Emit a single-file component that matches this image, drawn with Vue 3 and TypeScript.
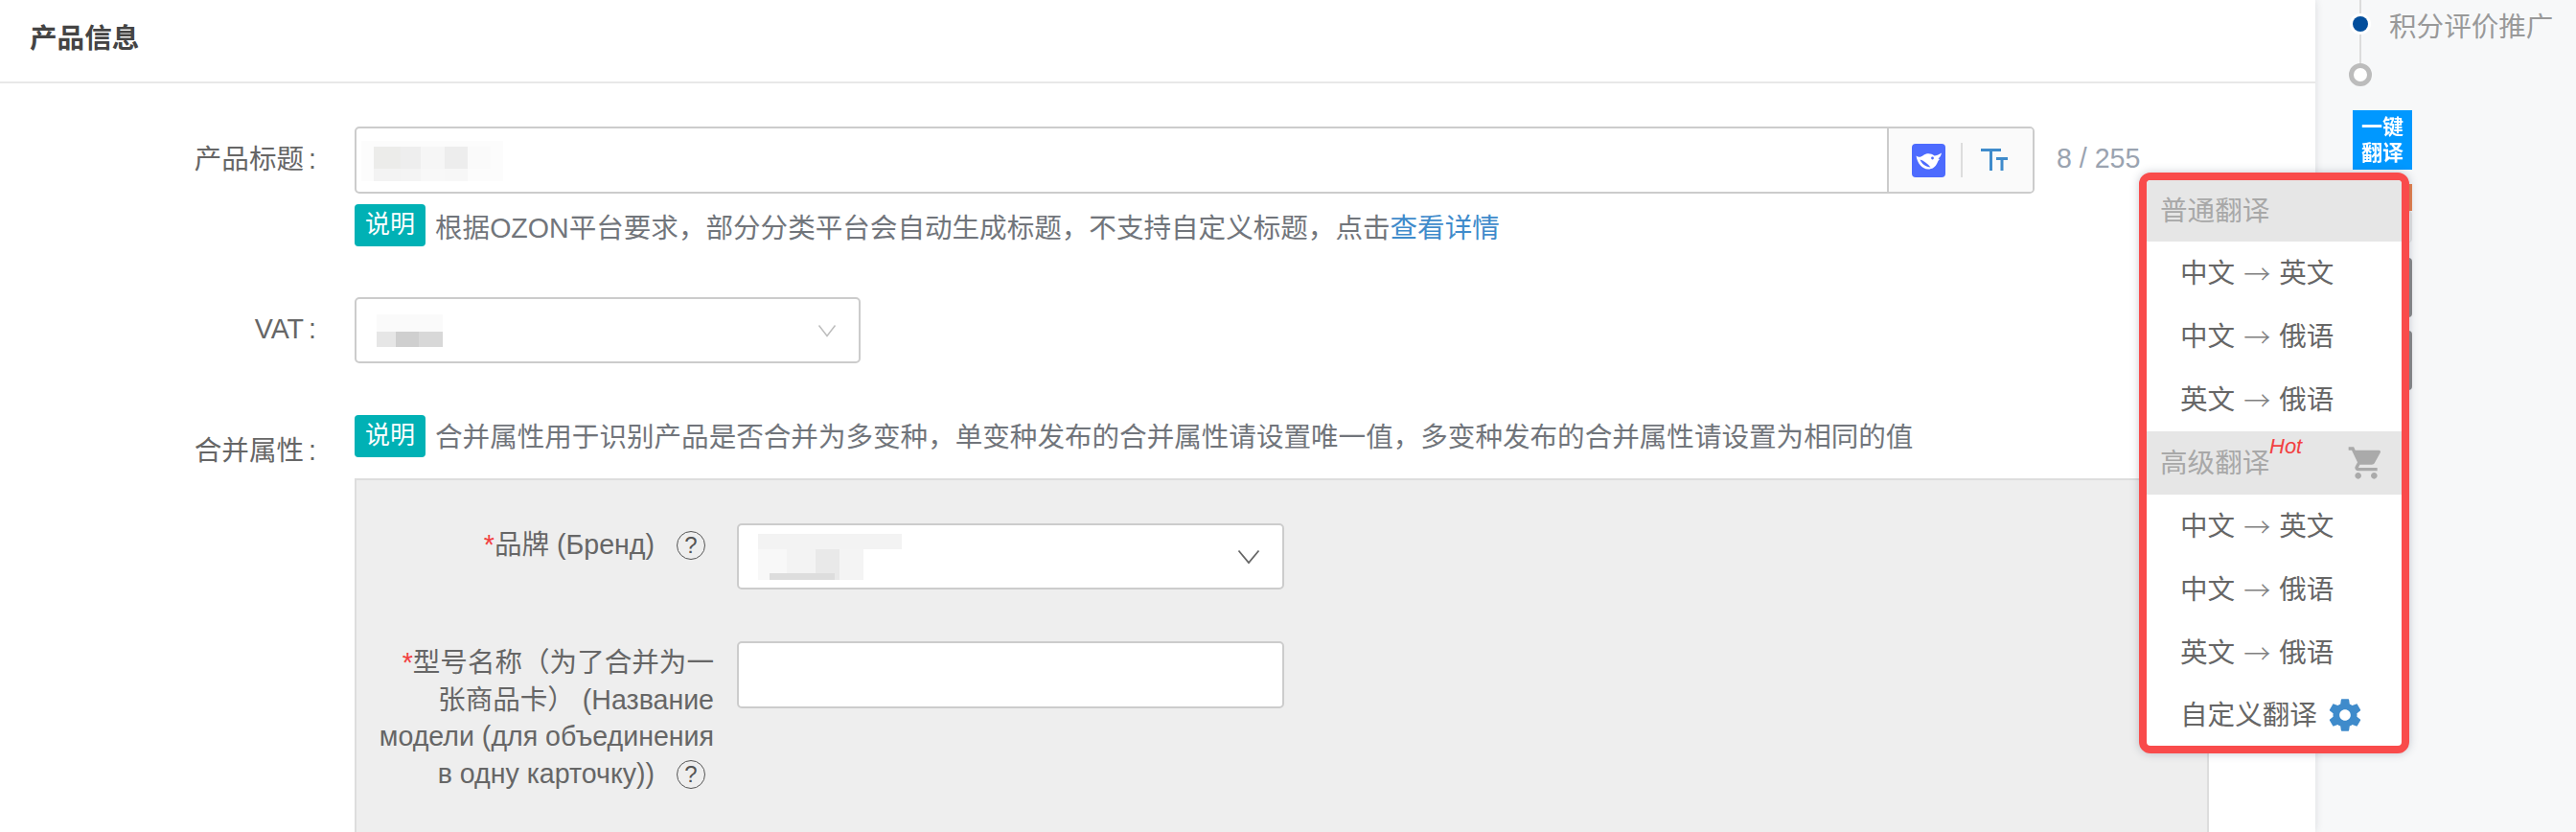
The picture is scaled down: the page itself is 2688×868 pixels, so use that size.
<script setup lang="ts">
interface Cell { x: number; y: number; w: number; h: number; c: string }
interface Pair { from: string; to: string }
const titleCells: Cell[] = [
  { x: 5, y: 14, w: 148, h: 42, c: '#fcfcfc' },
  { x: 18, y: 20, w: 28, h: 23, c: '#ececea' },
  { x: 46, y: 20, w: 21, h: 23, c: '#eeeeee' },
  { x: 67, y: 20, w: 25, h: 23, c: '#f6f6f6' },
  { x: 92, y: 20, w: 24, h: 23, c: '#ededed' },
  { x: 116, y: 20, w: 24, h: 23, c: '#fafafa' },
  { x: 18, y: 43, w: 28, h: 13, c: '#f3f3f3' },
  { x: 46, y: 43, w: 21, h: 13, c: '#f4f4f4' },
  { x: 67, y: 43, w: 25, h: 13, c: '#f8f8f8' },
  { x: 92, y: 43, w: 24, h: 13, c: '#f7f7f7' },
  { x: 116, y: 43, w: 24, h: 13, c: '#fcfcfc' }
]
const vatCells: Cell[] = [
  { x: 0, y: 0, w: 69, h: 18, c: '#fafafa' },
  { x: 0, y: 18, w: 20, h: 16, c: '#e6e6e6' },
  { x: 20, y: 18, w: 24, h: 16, c: '#cfcfcf' },
  { x: 44, y: 18, w: 25, h: 16, c: '#d8d8d8' }
]
const brandCells: Cell[] = [
  { x: 0, y: 0, w: 150, h: 16, c: '#f3f3f3' },
  { x: 0, y: 16, w: 30, h: 32, c: '#f8f8f8' },
  { x: 30, y: 16, w: 30, h: 32, c: '#f3f3f3' },
  { x: 60, y: 16, w: 25, h: 32, c: '#e9e9e9' },
  { x: 85, y: 16, w: 25, h: 32, c: '#f4f4f4' },
  { x: 12, y: 41, w: 68, h: 7, c: '#dddddd' }
]
const pairs: Pair[] = [
  { from: '中文', to: '英文' },
  { from: '中文', to: '俄语' },
  { from: '英文', to: '俄语' }
]
</script>

<template>
  <div class="page">
    <main class="main">
      <header class="head">产品信息</header>

      <section class="row first">
        <div class="label">产品标题<span class="colon">:</span></div>
        <div class="content">
          <div class="title-input">
            <div class="title-field">
              <svg class="mosaic" width="160" height="68" viewBox="0 0 160 68">
                <rect v-for="(m, i) in titleCells" :key="i" :x="m.x" :y="m.y" :width="m.w" :height="m.h" :fill="m.c" />
              </svg>
            </div>
            <div class="addon">
              <svg class="ds" width="35" height="35" viewBox="0 0 35 35">
                <rect width="35" height="35" rx="4" fill="#4d6bfe" />
                <path d="M4.500 12.500C7 14.500 9.500 14 12 12C15 9.500 20 9.500 23.500 12.500C25.500 12.500 28 11.500 31 9.500C30.500 12 29.500 14 27.500 15.500L29 16C27.500 17.500 27 18.500 26.500 20C24.500 24.500 21 26.500 17 26.500C10.500 26.500 5.500 20 4.500 12.500Z" fill="#fff" />
                <path d="M8.500 16.500C12 17.500 16.500 20.500 19.500 24.500C14.500 24 10 21 8.500 16.500Z" fill="#4d6bfe" />
                <circle cx="21.500" cy="15" r="1.400" fill="#4d6bfe" />
              </svg>
              <i class="sep"></i>
              <svg class="tt" width="30" height="24" viewBox="0 0 30 24">
                <path d="M0 1.500h21M10.500 1.500V23M16 10.500h12M22 10.500V23" fill="none" stroke="#3f8bcb" stroke-width="3" />
              </svg>
            </div>
          </div>
          <div class="tip">
            <span class="tag">说明</span>
            <span>根据OZON平台要求，部分分类平台会自动生成标题，不支持自定义标题，点击<a class="link">查看详情</a></span>
          </div>
        </div>
        <span class="count">8 / 255</span>
      </section>

      <section class="row vat">
        <div class="label vat-label">VAT<span class="colon">:</span></div>
        <div class="select vat-select">
          <svg class="mosaic-s" width="69" height="34" viewBox="0 0 69 34">
            <rect v-for="(m, i) in vatCells" :key="i" :x="m.x" :y="m.y" :width="m.w" :height="m.h" :fill="m.c" />
          </svg>
          <svg width="20" height="14" viewBox="0 0 20 14"><path d="M1.500 1.500 10 12.500 18.500 1.500" fill="none" stroke="#bdbdbd" stroke-width="1.500" /></svg>
        </div>
      </section>

      <section class="row merge">
        <div class="label merge-label">合并属性<span class="colon">:</span></div>
        <div class="content">
          <div class="tip tip-merge">
            <span class="tag">说明</span>
            <span class="merge-text">合并属性用于识别产品是否合并为多变种，单变种发布的合并属性请设置唯一值，多变种发布的合并属性请设置为相同的值</span>
          </div>
          <div class="panel">
            <div class="panel-row">
              <div class="panel-label"><em>*</em>品牌 (Бренд)<span class="q">?</span></div>
              <div class="select brand-select">
                <svg class="mosaic-b" width="150" height="48" viewBox="0 0 150 48">
                  <rect v-for="(m, i) in brandCells" :key="i" :x="m.x" :y="m.y" :width="m.w" :height="m.h" :fill="m.c" />
                </svg>
                <svg width="24" height="16" viewBox="0 0 24 16"><path d="M1.500 1.500 12 14 22.500 1.500" fill="none" stroke="#666" stroke-width="1.800" /></svg>
              </div>
            </div>
            <div class="panel-row model">
              <div class="panel-label"><em>*</em>型号名称（为了合并为一<br />张商品卡） (Название<br />модели (для объединения<br />в одну карточку))<span class="q">?</span></div>
              <div class="model-input"></div>
            </div>
          </div>
        </div>
      </section>
    </main>

    <aside class="side">
      <div class="timeline">
        <div class="step active"><span class="dot"></span><span class="step-text">积分评价推广</span></div>
        <div class="step idle"><span class="ring"></span></div>
      </div>
      <div class="translate"><span class="translate-text">一键<br />翻译</span></div>
      <div class="peek peek-orange"></div>
      <div class="peek peek-light"></div>
      <div class="peek peek-grey"></div>
      <div class="peek peek-grey second"></div>
    </aside>

    <div class="menu">
      <div class="menu-head">普通翻译</div>
      <div v-for="(t, i) in pairs" :key="'n' + i" class="menu-item">{{ t.from }}<span class="arrow">→</span>{{ t.to }}</div>
      <div class="menu-head adv">
        <span>高级翻译<sup class="hot">Hot</sup></span>
        <svg width="40" height="40" viewBox="0 0 24 24" fill="#aaaaaa"><path d="M7 18c-1.100 0-1.990.9-1.990 2S5.900 22 7 22s2-.9 2-2-.9-2-2-2zM1 2v2h2l3.600 7.590-1.350 2.450c-.16.28-.25.61-.25.96 0 1.100.9 2 2 2h12v-2H7.420c-.14 0-.25-.11-.25-.25l.03-.12.9-1.630h7.450c.75 0 1.410-.41 1.750-1.030l3.580-6.490A1 1 0 0 0 20 4H5.210l-.94-2H1zm16 16c-1.100 0-1.990.9-1.990 2s.89 2 1.990 2 2-.9 2-2-.9-2-2-2z" /></svg>
      </div>
      <div v-for="(t, i) in pairs" :key="'a' + i" class="menu-item">{{ t.from }}<span class="arrow">→</span>{{ t.to }}</div>
      <div class="menu-item custom">
        <span>自定义翻译</span>
        <svg width="40" height="40" viewBox="0 0 24 24" fill="#3f8bcb"><path d="M19.430 12.980c.04-.32.07-.64.07-.98s-.03-.66-.07-.98l2.110-1.650c.19-.15.24-.42.12-.64l-2-3.460c-.12-.22-.39-.3-.61-.22l-2.490 1c-.52-.4-1.080-.73-1.690-.98l-.38-2.650A.49.49 0 0 0 14 2h-4c-.25 0-.46.18-.49.42l-.38 2.650c-.61.25-1.170.59-1.690.98l-2.490-1c-.23-.09-.49 0-.61.22l-2 3.460c-.13.22-.07.49.12.64l2.110 1.650c-.04.32-.07.65-.07.98s.03.66.07.98l-2.110 1.650c-.19.15-.24.42-.12.64l2 3.460c.12.22.39.3.61.22l2.490-1c.52.4 1.080.73 1.690.98l.38 2.650c.03.24.24.42.49.42h4c.25 0 .46-.18.49-.42l.38-2.650c.61-.25 1.170-.59 1.690-.98l2.490 1c.23.09.49 0 .61-.22l2-3.460c.12-.22.07-.49-.12-.64l-2.110-1.650zM12 15.500c-1.930 0-3.500-1.570-3.500-3.500s1.570-3.500 3.500-3.500 3.500 1.570 3.500 3.500-1.570 3.500-3.500 3.500z" /></svg>
      </div>
    </div>
  </div>
</template>

<style>
html, body { margin: 0; background: #fff; overflow: hidden; }
</style>

<style scoped>
.page {
  position: relative;
  display: flex;
  width: 2688px;
  height: 868px;
  overflow: hidden;
  font-family: "Liberation Sans", "Noto Sans CJK SC", sans-serif;
  font-size: 28.57px;
  color: #666;
}
.main {
  width: 2416px;
  flex: none;
  background: #fff;
  box-shadow: 0 0 8px rgba(40, 50, 70, 0.14);
  position: relative;
  z-index: 1;
}
.head {
  box-sizing: border-box;
  border-bottom: 2px solid #e8e8e8;
  height: 87px;
  line-height: 80px;
  padding-left: 31px;
  font-weight: 700;
  color: #444;
}
.row { display: flex; align-items: flex-start; }
.first { margin-top: 45px; }
.label {
  width: 330px;
  flex: none;
  margin-right: 40px;
  text-align: right;
  line-height: 68px;
  box-sizing: border-box;
  white-space: nowrap;
}
.colon { margin-left: 5px; }
.content { flex: none; }
.title-input {
  display: flex;
  width: 1753px;
  height: 70px;
  box-sizing: border-box;
  border: 2px solid #ccc;
  border-radius: 5px;
  overflow: hidden;
}
.title-field { flex: 1; position: relative; display: flex; align-items: center; }
.mosaic { flex: none; }
.addon {
  width: 152px;
  box-sizing: border-box;
  border-left: 2px solid #ccc;
  background: #fafafa;
  display: flex;
  align-items: center;
  padding-left: 24px;
}
.sep { width: 2px; height: 36px; background: #ddd; margin: 0 19px 0 16px; }
.count {
  margin-left: 23px;
  line-height: 66px;
  color: #9aa3b0;
  white-space: nowrap;
}
.tip {
  display: flex;
  align-items: center;
  margin-top: 11px;
  height: 44px;
  color: #71757b;
  white-space: nowrap;
}
.tag {
  width: 74px;
  height: 44px;
  line-height: 42px;
  text-align: center;
  margin-right: 10px;
  background: #00b1b5;
  color: #fff;
  border-radius: 4px;
  font-size: 26px;
}
.link { color: #3f8bcb; }
.vat { margin-top: 53px; }
.vat-label { line-height: 66px; }
.select {
  display: flex;
  align-items: center;
  justify-content: space-between;
  box-sizing: border-box;
  border: 2px solid #ccc;
  border-radius: 5px;
  background: #fff;
}
.vat-select { width: 528px; height: 69px; padding: 0 23px 0 21px; }
.merge { margin-top: 54px; }
.merge-label { line-height: 40px; padding-top: 17px; }
.tip-merge { margin-top: 0; }
.merge-text { margin-bottom: 3px; }
.panel {
  width: 1935px;
  height: 400px;
  margin-top: 22px;
  box-sizing: border-box;
  border: 2px solid #ddd;
  background: #eeeeee;
  padding-top: 45px;
}
.panel-row { display: flex; align-items: flex-start; }
.model { margin-top: 54px; }
.panel-label {
  width: 373px;
  flex: none;
  margin-right: 24px;
  text-align: right;
  line-height: 38.600px;
  padding-top: 3px;
  box-sizing: border-box;
  white-space: nowrap;
}
.panel-label em { color: #f24141; font-style: normal; }
.q {
  display: inline-block;
  width: 28px;
  height: 28px;
  margin: 0 9px 0 23px;
  border: 1.500px solid #555;
  border-radius: 50%;
  text-align: center;
  font-size: 24px;
  line-height: 28px;
  vertical-align: 1px;
  color: #555;
}
.brand-select { width: 571px; height: 69px; padding: 0 23px 0 20px; }
.model-input {
  width: 571px;
  height: 70px;
  box-sizing: border-box;
  border: 2px solid #ccc;
  border-radius: 5px;
  background: #fff;
}
.side {
  flex: 1;
  background: #f7f8f9;
  padding-left: 35px;
  box-sizing: border-box;
}
.timeline { position: relative; height: 90px; }
.timeline::before {
  content: "";
  position: absolute;
  left: 11px;
  top: 0;
  width: 2px;
  height: 70px;
  background: #dcdcdc;
}
.step { display: flex; align-items: center; position: relative; }
.active { height: 50px; }
.idle { height: 24px; margin-top: 16px; }
.dot {
  width: 16px;
  height: 16px;
  margin: 0 22px 0 4px;
  border-radius: 50%;
  background: #024e9c;
  box-shadow: 0 0 0 3px #fff;
  flex: none;
}
.ring {
  width: 24px;
  height: 24px;
  box-sizing: border-box;
  border: 5px solid #bcbcbc;
  border-radius: 50%;
  background: #fff;
}
.step-text { color: #999; white-space: nowrap; }
.translate {
  width: 62px;
  height: 62px;
  margin: 25px 0 0 4px;
  background: #0098ff;
  color: #fff;
  font-size: 22px;
  line-height: 27px;
  text-align: center;
  padding-top: 4px;
  box-sizing: border-box;
  font-weight: 700;
}
.translate-text { display: block; filter: blur(0.6px); }
.peek { width: 62px; margin-left: 4px; border-radius: 4px; }
.peek-orange { height: 28px; margin-top: 15px; background: #e8834f; border-radius: 0; }
.peek-light { height: 33px; border-right: 2px solid #e4e4e4; box-sizing: border-box; }
.peek-grey { height: 62px; margin-top: 16px; background: #8c8c8c; }
.second { margin-top: 14px; }
.menu {
  position: absolute;
  z-index: 3;
  left: 2232px;
  top: 180px;
  width: 282px;
  height: 606px;
  box-sizing: border-box;
  border: 8px solid #f94b4b;
  border-radius: 12px;
  background: #fff;
  overflow: hidden;
  box-shadow: 0 0 10px rgba(40, 50, 80, 0.25);
}
.menu-head {
  height: 64px;
  line-height: 64px;
  padding-left: 14px;
  background: #e6e6e6;
  color: #a8a8a8;
  white-space: nowrap;
}
.adv {
  height: 66px;
  line-height: 66px;
  display: flex;
  justify-content: space-between;
  align-items: center;
  padding-right: 17px;
  position: relative;
}
.hot {
  font-size: 22px;
  font-style: italic;
  color: #f24141;
  position: absolute;
  left: 128px;
  top: -17px;
  line-height: 66px;
  vertical-align: baseline;
}
.menu-item {
  height: 66px;
  line-height: 66px;
  padding-left: 35px;
  color: #666;
  white-space: nowrap;
}
.arrow {
  font-family: "Noto Sans CJK SC", sans-serif;
  font-size: 28px;
  font-weight: 300;
  line-height: 0;
  margin: 0 9px;
  color: #808080;
  position: relative;
  top: 2px;
}
.custom {
  display: flex;
  align-items: center;
  gap: 9px;
  height: 64px;
}
</style>
